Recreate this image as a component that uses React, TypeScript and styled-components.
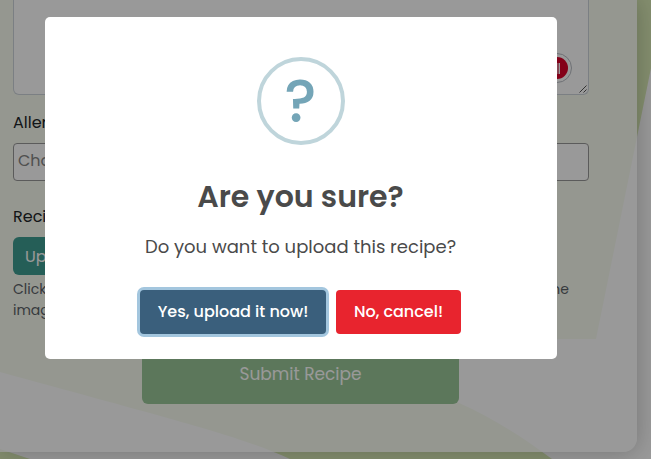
import React from 'react';
import styled, { createGlobalStyle } from 'styled-components';

const Global = createGlobalStyle`
  * { box-sizing: border-box; }
  html, body { margin: 0; height: 100%; overflow: hidden; }
  body { font-family: Poppins, Inter, "Open Sans", sans-serif; background: #fff; color: #212529; }
  button { font-family: inherit; }
`;

const Page = styled.div`
  position: relative;
  width: 651px;
  height: 459px;
  overflow: hidden;
  background: #fff;
`;

const Backdrop = styled.svg`
  position: absolute;
  inset: 0;
`;

const Card = styled.main`
  position: relative;
  width: 637px;
  height: 452px;
  padding: 0 48px 0 13px;
  display: flex;
  flex-direction: column;
  align-items: flex-start;
  border-bottom-right-radius: 14px;
  background: rgba(255, 255, 255, 0.8);
  box-shadow: 0 0 24px rgba(0, 0, 0, 0.24);
`;

const TextArea = styled.div`
  position: relative;
  flex: none;
  width: 576px;
  height: 95px;
  background: #fff;
  border: 1px solid #ced4da;
  border-top: 0;
  border-radius: 0 0 6px 6px;
`;

const Badge = styled.div`
  position: absolute;
  right: 16px;
  bottom: 11px;
  width: 30px;
  height: 30px;
  display: grid;
  place-items: center;
  border: 1px solid #b8bcc4;
  border-radius: 50%;
  background: #fff;
`;

const BadgeDot = styled.div`
  width: 22px;
  height: 22px;
  display: flex;
  align-items: center;
  justify-content: center;
  border-radius: 50%;
  background: #dc0028;
  &::after {
    content: '';
    width: 5px;
    height: 11px;
    margin-right: 1px;
    border-right: 1px solid #fff;
    background: #e0768c;
  }
`;

const Grip = styled.svg`
  position: absolute;
  right: 1px;
  bottom: 1px;
`;

const Label = styled.label<{ $gap: number }>`
  margin-top: ${(p) => p.$gap}px;
  height: 24px;
  font-size: 16px;
  line-height: 24px;
`;

const Select = styled.div`
  flex: none;
  width: 576px;
  height: 38px;
  margin-top: 8px;
  padding: 0 4px;
  border: 1px solid #989898;
  border-radius: 4px;
  background: #fff;
  color: #858585;
  font-size: 16px;
  line-height: 34px;
`;

const UploadButton = styled.button`
  flex: none;
  height: 38px;
  margin-top: 8px;
  padding: 0 12px;
  border: 0;
  border-radius: 6px;
  background: #3f9d91;
  color: #fff;
  font-size: 16px;
`;

const Hint = styled.div`
  display: flex;
  justify-content: space-between;
  width: 556px;
  margin-top: 4px;
  color: #5c6267;
  font-size: 14px;
  line-height: 21px;
`;

const SubmitButton = styled.button`
  flex: none;
  width: 317px;
  height: 60px;
  margin: 23px 0 0 129px;
  border: 0;
  border-radius: 6px;
  background: #9ac798;
  color: #fff;
  font-size: 17px;
`;

const Overlay = styled.div`
  position: absolute;
  inset: 0;
  display: flex;
  align-items: flex-start;
  padding: 17px 0 0 45px;
  background: rgba(0, 0, 0, 0.4);
`;

const Dialog = styled.section`
  width: 512px;
  height: 342px;
  padding-top: 40px;
  display: flex;
  flex-direction: column;
  align-items: center;
  border-radius: 5px;
  background: #fff;
  color: #4a4a4a;
`;

const QuestionIcon = styled.div`
  flex: none;
  width: 88px;
  height: 88px;
  padding-right: 1px;
  display: flex;
  align-items: center;
  justify-content: center;
  border: 4px solid #bfd5db;
  border-radius: 50%;
  color: #74a5b7;
  font-size: 60px;
  font-weight: 500;
  line-height: 80px;
`;

const Title = styled.h2`
  margin: 29px 1px 0 0;
  font-size: 30px;
  line-height: 45px;
  font-weight: 600;
  white-space: nowrap;
`;

const Message = styled.p`
  margin: 14px 1px 0 0;
  font-size: 18px;
  line-height: 27px;
  white-space: nowrap;
`;

const Actions = styled.div`
  display: flex;
  gap: 10px;
  margin: 30px 1px 0 0;
`;

const ActionButton = styled.button<{ $color: string; $width: number; $focused?: boolean }>`
  width: ${(p) => p.$width}px;
  height: 44px;
  padding: 0 0 2px;
  border: 0;
  border-radius: 4px;
  background: ${(p) => p.$color};
  box-shadow: ${(p) => (p.$focused ? '0 0 0 3px #a3c6de' : 'none')};
  color: #fff;
  font-size: 16px;
  font-weight: 500;
  white-space: nowrap;
`;

export default function App() {
  return (
    <>
      <Global />
      <Page>
        <Backdrop width="651" height="459" viewBox="0 0 651 459" fill="#dcedb8">
          <path d="M0 0H651V68L637 137L596 339H0Z" />
          <path d="M0 339H300C360 357 420 382 459 403C495 419 525 439 552 459H290C245 438 190 424 0 372Z" />
          <path d="M0 449L30 459H0Z" />
        </Backdrop>
        <Card>
          <TextArea>
            <Badge><BadgeDot /></Badge>
            <Grip width="8" height="8" viewBox="0 0 8 8" stroke="#555" strokeWidth="1">
              <path d="M0.5 7.5L7.5 0.5M4.5 7.5L7.5 4.5" />
            </Grip>
          </TextArea>
          <Label $gap={16}>Allergens</Label>
          <Select>Choose</Select>
          <Label $gap={24}>Recipe Image</Label>
          <UploadButton>Upload</UploadButton>
          <Hint>
            <span>Click<br />image</span>
            <span>the</span>
          </Hint>
          <SubmitButton>Submit Recipe</SubmitButton>
        </Card>
        <Overlay>
          <Dialog role="dialog">
            <QuestionIcon>?</QuestionIcon>
            <Title>Are you sure?</Title>
            <Message>Do you want to upload this recipe?</Message>
            <Actions>
              <ActionButton $color="#3a5f7c" $width={186} $focused>Yes, upload it now!</ActionButton>
              <ActionButton $color="#e8242e" $width={125}>No, cancel!</ActionButton>
            </Actions>
          </Dialog>
        </Overlay>
      </Page>
    </>
  );
}
